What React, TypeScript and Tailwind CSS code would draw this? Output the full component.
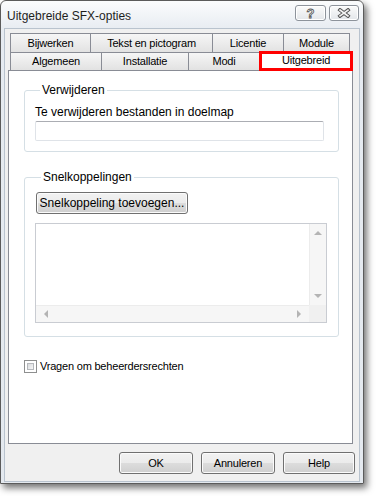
import React from 'react';

const ui = "font-['Liberation_Sans',Arial,sans-serif]";
const tabText = 'text-[11px] tracking-[-0.2px] text-black';

const Tab = ({ label, w, h }: { label: string; w: string; h: string }) => (
  <div
    className={`${w} ${h} -ml-px first:ml-0 shrink-0 border border-b-0 border-[#898c95] bg-[linear-gradient(#f6f6f6,#e2e2e2)] flex items-center justify-center ${tabText}`}
  >
    {label}
  </div>
);

const Btn = ({ label, w }: { label: string; w: string }) => (
  <button
    className={`${w} h-[22px] rounded-[3px] border border-[#707070] bg-[linear-gradient(#f2f2f2_0%,#ebebeb_50%,#dddddd_50%,#cfcfcf_100%)] shadow-[inset_0_0_0_1px_#fbfbfb] flex items-center justify-center ${tabText}`}
  >
    {label}
  </button>
);

const Arrow = ({ dir }: { dir: 'up' | 'down' | 'left' | 'right' }) => {
  const pts = {
    up: '0,4 4,0 8,4',
    down: '0,0 8,0 4,4',
    left: '4,0 4,8 0,4',
    right: '0,0 0,8 4,4',
  }[dir];
  const vert = dir === 'up' || dir === 'down';
  return (
    <svg width={vert ? 8 : 4} height={vert ? 4 : 8} viewBox={vert ? '0 0 8 4' : '0 0 4 8'}>
      <polygon points={pts} fill="#b4b4b4" />
    </svg>
  );
};

export default function App() {
  return (
    <div className={`min-h-screen bg-white ${ui}`}>
      {/* Window */}
      <div className="w-[364px] h-[484px] flex flex-col border border-[#5b5b5b] rounded-t-[6px] bg-[linear-gradient(#fbfcfd,#e6ebf1_30px,#e4e9ef)] shadow-[3px_4px_7px_rgba(0,0,0,0.55)] px-[3px] pb-[2px]">
        {/* Title bar */}
        <div className="h-[27px] shrink-0 flex items-start justify-between pl-[3px] pr-[1px]">
          <span className="mt-[6px] text-[12px] text-[#1e1e1e]">Uitgebreide SFX-opties</span>
          <div className="flex gap-[3px] mt-[4px]">
            <div className="w-[31px] h-[16px] rounded-[3px] border border-[#8d939b] bg-[linear-gradient(#fbfbfb,#e3e6ea)] shadow-[inset_0_0_0_1px_#ffffff] flex items-center justify-center">
              <span className="text-[13px] font-bold leading-none text-[#f4f4f4] [-webkit-text-stroke:0.8px_#555555]">?</span>
            </div>
            <div className="w-[30px] h-[16px] rounded-[3px] border border-[#8d939b] bg-[linear-gradient(#fbfbfb,#e3e6ea)] shadow-[inset_0_0_0_1px_#ffffff] flex items-center justify-center">
              <svg width="14" height="10" viewBox="0 0 14 10">
                <path d="M3 2 L11 8 M11 2 L3 8" stroke="#555555" strokeWidth="3.6" strokeLinecap="square" />
                <path d="M3 2 L11 8 M11 2 L3 8" stroke="#f4f4f4" strokeWidth="1.6" strokeLinecap="square" />
              </svg>
            </div>
          </div>
        </div>

        {/* Client area */}
        <div className="flex-1 flex flex-col border border-[#b9c3ce] bg-[#f0f0f0] pt-[4px] pb-[7px]">
          {/* Tab rows */}
          <div className="flex flex-col ml-[5px]">
            <div className="flex h-[19px]">
              <Tab label="Bijwerken" w="w-[81px]" h="h-[19px]" />
              <Tab label="Tekst en pictogram" w="w-[123px]" h="h-[19px]" />
              <Tab label="Licentie" w="w-[72px]" h="h-[19px]" />
              <Tab label="Module" w="w-[67px]" h="h-[19px]" />
            </div>
            <div className="flex h-[18px]">
              <Tab label="Algemeen" w="w-[92px]" h="h-[18px]" />
              <Tab label="Installatie" w="w-[88px]" h="h-[18px]" />
              <Tab label="Modi" w="w-[72px]" h="h-[18px]" />
              <div
                className={`relative z-10 -ml-px -mt-px w-[94px] h-[20px] shrink-0 border-[3px] border-[#ff0000] bg-white flex items-start justify-center leading-[12px] ${tabText}`}
              >
                Uitgebreid
              </div>
            </div>
          </div>

          {/* Tab pane */}
          <div className="ml-[3px] w-[345px] h-[374px] shrink-0 border border-[#898c95] bg-white flex flex-col pl-[15px] pt-[12px]">
            <fieldset className="w-[315px] rounded-[3px] border border-[#d5dfe5] pl-[10px] pb-[10px]">
              <legend className="ml-[5px] px-[2px] text-[12px] leading-[15px] text-black">Verwijderen</legend>
              <div className="mt-[7px] text-[12px] leading-[15px] text-black">Te verwijderen bestanden in doelmap</div>
              <div className="mt-px w-[289px] h-[20px] rounded-[2px] border border-[#dfe3e8] border-t-[#abadb3] bg-white" />
            </fieldset>

            <fieldset className="mt-[18px] w-[315px] rounded-[3px] border border-[#d5dfe5] pl-[11px] pb-[13px]">
              <legend className="ml-[5px] px-[2px] text-[12px] leading-[15px] text-black">Snelkoppelingen</legend>
              <button className="mt-[7px] w-[152px] h-[22px] rounded-[3px] border border-[#707070] bg-[linear-gradient(#f2f2f2_0%,#ebebeb_50%,#dddddd_50%,#cfcfcf_100%)] shadow-[inset_0_0_0_1px_#fbfbfb] text-[12px] text-black flex items-center justify-center">
                Snelkoppeling toevoegen...
              </button>
              <div className="-ml-px mt-[9px] w-[292px] h-[100px] border border-[#c9ccd2] bg-white flex flex-col">
                <div className="flex-1 flex">
                  <div className="flex-1" />
                  <div className="w-[17px] bg-[#f6f6f6] border-l border-[#ececec] flex flex-col items-center justify-between py-[7px]">
                    <Arrow dir="up" />
                    <Arrow dir="down" />
                  </div>
                </div>
                <div className="h-[17px] flex">
                  <div className="flex-1 bg-[#f6f6f6] border-t border-[#ececec] flex items-center justify-between px-[8px]">
                    <Arrow dir="left" />
                    <Arrow dir="right" />
                  </div>
                  <div className="w-[17px] bg-[#f0f0f0]" />
                </div>
              </div>
            </fieldset>

            <label className="mt-[21px] flex items-center gap-[3px]">
              <span className="w-[13px] h-[13px] border border-[#8e8f8f] bg-white p-[2px] flex">
                <span className="flex-1 border border-[#b5b8bc] bg-[linear-gradient(135deg,#d9dbdd,#f7f7f7)]" />
              </span>
              <span className={tabText}>Vragen om beheerdersrechten</span>
            </label>
          </div>

          {/* Dialog buttons */}
          <div className="mt-[8px] mr-[4px] flex justify-end gap-[8px]">
            <Btn label="OK" w="w-[74px]" />
            <Btn label="Annuleren" w="w-[74px]" />
            <Btn label="Help" w="w-[72px]" />
          </div>
        </div>
      </div>
    </div>
  );
}
